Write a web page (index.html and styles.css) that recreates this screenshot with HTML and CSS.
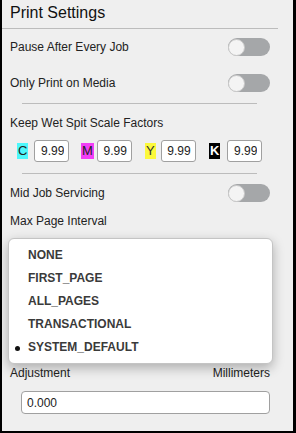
FILE: index.html
```html
<!DOCTYPE html>
<html lang="en">
<head>
  <meta charset="UTF-8">
  <title>Print Settings</title>
  <meta name="viewport" content="width=device-width, initial-scale=1.0">
  <link rel="stylesheet" href="styles.css">
</head>
<body>
  <div class="panel">
    <h1 class="title">Print Settings</h1>

    <div class="row">
      <span>Pause After Every Job</span>
      <span class="toggle"><span class="knob"></span></span>
    </div>
    <div class="row">
      <span>Only Print on Media</span>
      <span class="toggle"><span class="knob"></span></span>
    </div>

    <hr class="sep">

    <div class="label spit">Keep Wet Spit Scale Factors</div>
    <div class="factors">
      <div class="factor"><span class="ink ink-c">C</span><input class="num" type="text" value="9.99"></div>
      <div class="factor"><span class="ink ink-m">M</span><input class="num" type="text" value="9.99"></div>
      <div class="factor"><span class="ink ink-y">Y</span><input class="num" type="text" value="9.99"></div>
      <div class="factor"><span class="ink ink-k">K</span><input class="num" type="text" value="9.99"></div>
    </div>

    <hr class="sep sep-low">

    <div class="row row-mid">
      <span>Mid Job Servicing</span>
      <span class="toggle"><span class="knob"></span></span>
    </div>

    <div class="label">Max Page Interval</div>
    <div class="select-area">
      <ul class="menu">
        <li>NONE</li>
        <li>FIRST_PAGE</li>
        <li>ALL_PAGES</li>
        <li>TRANSACTIONAL</li>
        <li class="selected">SYSTEM_DEFAULT</li>
      </ul>
    </div>

    <div class="units">
      <span>Adjustment</span>
      <span>Millimeters</span>
    </div>
    <input class="adjust" type="text" value="0.000">
  </div>
</body>
</html>
```

FILE: styles.css
```css
body {
  margin: 0;
  font-family: "Liberation Sans", Arial, sans-serif;
  color: #222;
  background: #fff;
}

.panel {
  height: 433px;
  box-sizing: border-box;
  border-left: 2px solid #000;
  border-right: 3px solid #000;
  border-bottom: 2px solid #000;
  background: #efefef;
}

.title {
  margin: 0 15px 0 0;
  padding-left: 8px;
  height: 28px;
  line-height: 25px;
  font-size: 16px;
  font-weight: normal;
  color: #111;
  border-bottom: 1px solid #bcbcbc;
}

.row {
  height: 36px;
  display: flex;
  align-items: center;
  justify-content: space-between;
  padding: 0 23px 0 8px;
  font-size: 12px;
}

.row-mid {
  height: 38px;
}

.toggle {
  width: 42px;
  height: 18px;
  border-radius: 9px;
  background: #a5a7a9;
  display: flex;
  align-items: center;
}

.knob {
  width: 17px;
  height: 17px;
  border-radius: 50%;
  background: #f4f4f4;
  border: 1px solid #c8c8c8;
  box-sizing: border-box;
}

.sep {
  margin: 2px 36px 0 20px;
  border: 0;
  border-top: 1px solid #bcbcbc;
}

.sep-low {
  margin-top: 11px;
}

.label {
  font-size: 12px;
  line-height: 18px;
  padding-left: 8px;
}

.spit {
  padding-top: 10px;
}

.factors {
  display: flex;
  gap: 13px;
  padding-left: 15px;
  margin-top: 8px;
}

.factor {
  display: flex;
  align-items: center;
  width: 51px;
}

.ink {
  font-size: 13px;
  line-height: 16px;
  padding: 0 1px;
}

.ink-c { background: #4ef7fb; margin-right: 6px; }
.ink-m { background: #f23ef6; margin-right: 3px; }
.ink-y { background: #fcf93c; margin-right: 5px; color: #333; }
.ink-k { background: #000; color: #fff; font-weight: bold; margin-right: 7px; }

.num {
  width: 35px;
  height: 22px;
  box-sizing: border-box;
  border: 1px solid #a0a0a0;
  border-radius: 3px;
  background: #fff;
  text-align: right;
  padding: 0 4px;
  font-family: inherit;
  font-size: 12px;
  color: #222;
}

.select-area {
  position: relative;
  height: 135px;
}

.menu {
  position: absolute;
  left: 6px;
  top: 8px;
  width: 265px;
  box-sizing: border-box;
  margin: 0;
  padding: 5px 0 4px;
  list-style: none;
  background: #fff;
  border: 1px solid #c4c4c4;
  border-radius: 6px;
  box-shadow: 0 4px 12px rgba(0, 0, 0, 0.28);
}

.menu li {
  height: 23px;
  line-height: 23px;
  padding-left: 19px;
  font-size: 12px;
  font-weight: bold;
  color: #3a3a3a;
  position: relative;
}

.menu li.selected::before {
  content: "";
  position: absolute;
  left: 6px;
  top: 10px;
  width: 5px;
  height: 5px;
  border-radius: 50%;
  background: #111;
}

.units {
  display: flex;
  justify-content: space-between;
  padding: 0 23px 0 8px;
  font-size: 12px;
  line-height: 16px;
}

.adjust {
  display: block;
  margin: 10px 0 0 19px;
  width: 249px;
  height: 23px;
  box-sizing: border-box;
  border: 1px solid #a0a0a0;
  border-radius: 4px;
  background: #fff;
  padding: 0 5px;
  font-family: inherit;
  font-size: 12px;
  color: #222;
}
```
